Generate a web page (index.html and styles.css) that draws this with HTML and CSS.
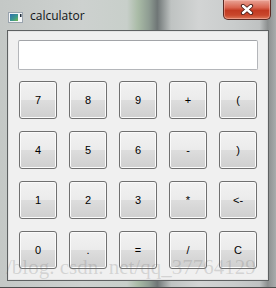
FILE: index.html
```html
<!DOCTYPE html>
<html lang="en">
<head>
    <meta charset="UTF-8">
    <title>calculator</title>
    <link rel="stylesheet" href="styles.css">
</head>
<body>
    <div class="window">
        <div class="titlebar">
            <svg class="app-icon" width="15" height="11" viewBox="0 0 15 11">
                <defs>
                    <linearGradient id="ig" x1="0" y1="0" x2="1" y2="1">
                        <stop offset="0" stop-color="#2f6fb0"/>
                        <stop offset="0.6" stop-color="#3c9a8c"/>
                        <stop offset="1" stop-color="#79b84a"/>
                    </linearGradient>
                </defs>
                <rect x="0.5" y="0.5" width="14" height="10" fill="#f4f6f8" stroke="#9aa4ae"/>
                <rect x="2" y="2" width="8" height="7" fill="url(#ig)"/>
                <rect x="12" y="2" width="1.5" height="3" fill="#1c2a38"/>
            </svg>
            <span class="title">calculator</span>
            <button class="close-btn" type="button" title="Close">
                <svg width="14" height="11" viewBox="0 0 14 11">
                    <path d="M3 2 L11 9 M11 2 L3 9" stroke="#4a1e18" stroke-width="4.2" stroke-linecap="round"/>
                    <path d="M3 2 L11 9 M11 2 L3 9" stroke="#ffffff" stroke-width="2.4" stroke-linecap="round"/>
                </svg>
            </button>
        </div>

        <div class="client">
            <input class="display" type="text" readonly>
            <div class="keys">
                <button class="key">7</button>
                <button class="key">8</button>
                <button class="key">9</button>
                <button class="key">+</button>
                <button class="key">(</button>
                <button class="key">4</button>
                <button class="key">5</button>
                <button class="key">6</button>
                <button class="key">-</button>
                <button class="key">)</button>
                <button class="key">1</button>
                <button class="key">2</button>
                <button class="key">3</button>
                <button class="key">*</button>
                <button class="key">&lt;-</button>
                <button class="key">0</button>
                <button class="key">.</button>
                <button class="key">=</button>
                <button class="key">/</button>
                <button class="key">C</button>
            </div>
        </div>

        <div class="watermark">/blog. csdn. net/qq_37764129</div>
    </div>
</body>
</html>
```

FILE: styles.css
```css
body {
    margin: 0;
    background: #ffffff;
    font-family: "DejaVu Sans", sans-serif;
}

/* Aero style window frame */
.window {
    position: relative;
    width: 276px;
    height: 288px;
    box-sizing: border-box;
    padding: 0 7px 7px 7px;
    overflow: hidden;
    background:
        linear-gradient(90deg,
            #c4c8c6 0%, #cdd1cf 30%, #c8cfca 46%, #a9bba6 50%,
            #8e9c92 54%, #6f7676 57%, #bfc3c2 62%, #d2d4d4 72%,
            #c9cccc 85%, #bfc2c2 94%, #8c8f8f 97%, #a9acac 100%);
    border-bottom: 1px solid #4d4d4d;
}

.titlebar {
    display: flex;
    align-items: center;
    height: 30px;
    padding-left: 1px;
}

.app-icon {
    margin-top: 4px;
}

.title {
    margin-left: 7px;
    margin-top: 1px;
    font-family: "Open Sans", sans-serif;
    font-size: 12px;
    color: #101418;
}

.close-btn {
    display: flex;
    align-items: center;
    justify-content: center;
    align-self: flex-start;
    margin-left: auto;
    margin-right: -2px;
    width: 48px;
    height: 20px;
    padding: 0;
    border: 1px solid #5a2a24;
    border-top: none;
    border-radius: 0 0 5px 5px;
    background: linear-gradient(#e9a597 0%, #d9644f 40%, #c23a22 55%, #c9472c 80%, #dc7a5c 100%);
    box-shadow: inset 0 0 0 1px rgba(255, 200, 190, 0.45);
}

.client {
    height: 251px;
    box-sizing: border-box;
    padding: 9px 10px;
    background: #f0f0f0;
    border: 1px solid #5e6162;
    box-shadow: inset 0 0 0 1px #e4e4e4;
}

.display {
    display: block;
    width: 240px;
    height: 30px;
    box-sizing: border-box;
    margin: 0;
    border: 1px solid #b4b6ba;
    border-top-color: #a2a4a8;
    border-radius: 2px;
    background: #ffffff;
}

.keys {
    display: grid;
    grid-template-columns: repeat(5, 38px);
    grid-auto-rows: 38px;
    gap: 12px;
    margin-top: 11px;
    padding-left: 1px;
}

.key {
    padding: 0;
    border: 1px solid #707070;
    border-radius: 3px;
    background: linear-gradient(#f2f2f2 0%, #ebebeb 50%, #dddddd 51%, #cfcfcf 100%);
    box-shadow: inset 0 0 0 1px #fbfbfb;
    font-family: "Liberation Sans", sans-serif;
    font-size: 11px;
    color: #000000;
}

.watermark {
    position: absolute;
    left: 6px;
    bottom: 7px;
    font-family: "Liberation Serif", serif;
    font-size: 21px;
    white-space: nowrap;
    color: rgba(110, 110, 110, 0.22);
    pointer-events: none;
}
```
